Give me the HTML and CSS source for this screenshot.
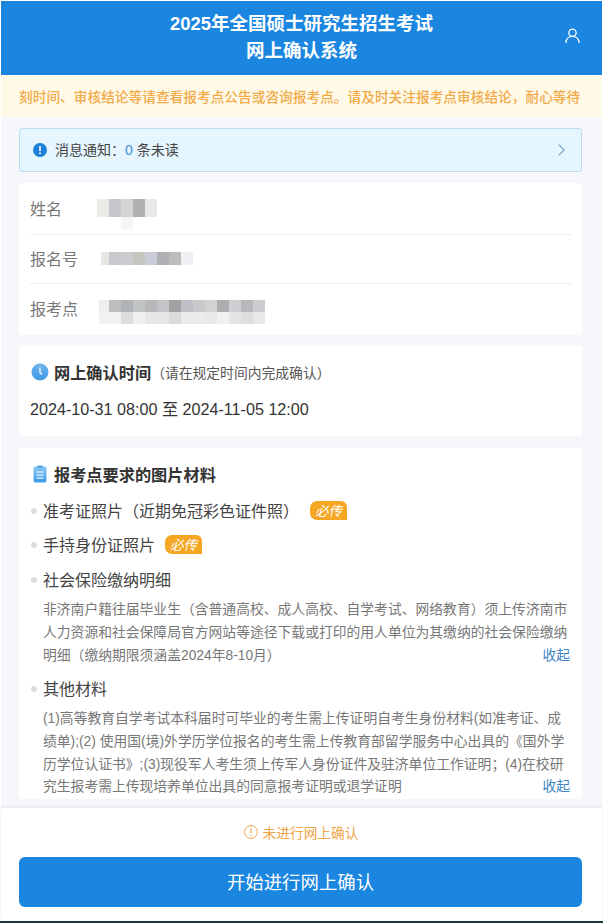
FILE: index.html
```html
<!DOCTYPE html>
<html lang="zh-CN">
<head>
<meta charset="utf-8">
<title>网上确认系统</title>
<link rel="stylesheet" href="styles.css">
</head>
<body>
<div class="page">
  <header class="top">
    <h1 class="top-title">2025年全国硕士研究生招生考试<br>网上确认系统</h1>
    <svg class="user-icon" viewBox="0 0 16 16" fill="none" stroke="#fff" stroke-width="1.4"><circle cx="8" cy="5" r="3.9"/><path d="M1 15.300c.3-4 3.300-6.400 7-6.400s6.700 2.400 7 6.400" stroke-linecap="round"/></svg>
  </header>
  <div class="notice"><span class="notice-text">刻时间、审核结论等请查看报考点公告或咨询报考点。请及时关注报考点审核结论，耐心等待</span></div>
  <main class="main">
    <div class="msg">
      <svg class="msg-icon" viewBox="0 0 14 14"><circle cx="7" cy="7" r="7" fill="#1a80d8"/><rect x="6.200" y="3" width="1.600" height="5.200" rx=".6" fill="#fff"/><circle cx="7" cy="10.300" r="1" fill="#fff"/></svg>
      <span class="msg-text">消息通知：<span class="msg-count">0</span> 条未读</span>
      <svg class="chev" viewBox="0 0 7 12" fill="none" stroke="#6f9cc4" stroke-width="1.100"><path d="M.7 .7l5.500 5.300-5.500 5.300"/></svg>
    </div>

    <section class="card info">
      <div class="row">
        <span class="label">姓名</span>
        <svg class="blur blur-name" viewBox="0 0 60 30"><rect width="12" height="18" fill="#ecebe8"/><rect x="12" width="12" height="18" fill="#c6c7cb"/><rect x="24" width="12" height="18" fill="#d2d4d6"/><rect x="36" width="12" height="18" fill="#b0b0b3"/><rect x="48" width="12" height="18" fill="#e8e8ea"/><rect x="24" y="18" width="12" height="12" fill="#f5f5f6"/></svg>
      </div>
      <div class="row">
        <span class="label">报名号</span>
        <svg class="blur blur-reg" viewBox="0 0 92 13"><rect width="8" height="13" fill="#e8e6e2"/><rect x="8" width="12" height="13" fill="#c8c8cd"/><rect x="20" width="12" height="13" fill="#cbcacf"/><rect x="32" width="12" height="13" fill="#c6c6c0"/><rect x="44" width="12" height="13" fill="#c9ccd6"/><rect x="56" width="12" height="13" fill="#b0b0b4"/><rect x="68" width="12" height="13" fill="#bcbcba"/><rect x="80" width="12" height="13" fill="#eef0f3"/></svg>
      </div>
      <div class="row">
        <span class="label">报考点</span>
        <svg class="blur blur-site" viewBox="0 0 166 24"><rect width="10" height="12" fill="#f0efee"/><rect x="10" width="12" height="12" fill="#bdbebf"/><rect x="22" width="12" height="12" fill="#b0b3b5"/><rect x="34" width="12" height="12" fill="#c0c4c5"/><rect x="46" width="12" height="12" fill="#b9b6b9"/><rect x="58" width="12" height="12" fill="#c3c4c8"/><rect x="70" width="12" height="12" fill="#a2a2a5"/><rect x="82" width="12" height="12" fill="#c1bfc5"/><rect x="94" width="12" height="12" fill="#c9c9cc"/><rect x="106" width="12" height="12" fill="#d1d3d3"/><rect x="118" width="12" height="12" fill="#aeaeb0"/><rect x="130" width="12" height="12" fill="#cfcfd3"/><rect x="142" width="12" height="12" fill="#b9b7bc"/><rect x="154" width="12" height="12" fill="#cdcdd1"/><rect y="12" width="22" height="12" fill="#f2f1f0"/><rect x="22" y="12" width="12" height="12" fill="#dddddd"/><rect x="34" y="12" width="12" height="12" fill="#eff1f1"/><rect x="46" y="12" width="24" height="12" fill="#e6e6e7"/><rect x="70" y="12" width="12" height="12" fill="#dcdcdd"/><rect x="82" y="12" width="24" height="12" fill="#ebebed"/><rect x="106" y="12" width="12" height="12" fill="#e8e9e9"/><rect x="118" y="12" width="12" height="12" fill="#f1f1f2"/><rect x="130" y="12" width="12" height="12" fill="#e4e4e6"/><rect x="142" y="12" width="12" height="12" fill="#dedee0"/><rect x="154" y="12" width="12" height="12" fill="#e8e8ea"/></svg>
      </div>
    </section>

    <section class="card time">
      <h2 class="heading">
        <svg class="head-icon" viewBox="0 0 18 18"><defs><linearGradient id="clk" x1="0" y1="0" x2="0" y2="1"><stop offset="0" stop-color="#70b6ee"/><stop offset="1" stop-color="#3d98e6"/></linearGradient></defs><circle cx="9" cy="9" r="8.500" fill="url(#clk)"/><path d="M9 4.500V9.500l2 2" fill="none" stroke="#fff" stroke-width="1.300"/></svg>
        <span>网上确认时间</span><span class="heading-sub">（请在规定时间内完成确认）</span>
      </h2>
      <p class="date">2024-10-31 08:00 至 2024-11-05 12:00</p>
    </section>

    <section class="card materials">
      <h2 class="heading heading-mat">
        <svg class="head-icon" viewBox="0 0 18 18"><defs><linearGradient id="clp" x1="0" y1="0" x2="0" y2="1"><stop offset="0" stop-color="#8ccaf5"/><stop offset="1" stop-color="#3d9ae8"/></linearGradient></defs><rect x="2.500" y="1.500" width="13" height="16" rx="2" fill="url(#clp)"/><rect x="6" y=".5" width="6" height="2.500" rx=".8" fill="#5aa8e8"/><path d="M5.500 7h7M5.500 10h7M5.500 13h7" stroke="#fff" stroke-width="1.100"/></svg>
        <span>报考点要求的图片材料</span>
      </h2>
      <ul class="list">
        <li class="item">
          <div class="item-title">准考证照片（近期免冠彩色证件照）<span class="badge badge-wide">必传</span></div>
        </li>
        <li class="item">
          <div class="item-title">手持身份证照片<span class="badge">必传</span></div>
        </li>
        <li class="item item-third">
          <div class="item-title">社会保险缴纳明细</div>
          <div class="desc">
            <div>非济南户籍往届毕业生（含普通高校、成人高校、自学考试、网络教育）须上传济南市</div>
            <div>人力资源和社会保障局官方网站等途径下载或打印的用人单位为其缴纳的社会保险缴纳</div>
            <div class="desc-last"><span>明细（缴纳期限须涵盖2024年8-10月）</span><a class="more">收起</a></div>
          </div>
        </li>
        <li class="item item-gap">
          <div class="item-title">其他材料</div>
          <div class="desc">
            <div>(1)高等教育自学考试本科届时可毕业的考生需上传证明自考生身份材料(如准考证、成</div>
            <div>绩单);(2) 使用国(境)外学历学位报名的考生需上传教育部留学服务中心出具的《国外学</div>
            <div>历学位认证书》;(3)现役军人考生须上传军人身份证件及驻济单位工作证明；(4)在校研</div>
            <div class="desc-last"><span>究生报考需上传现培养单位出具的同意报考证明或退学证明</span><a class="more">收起</a></div>
          </div>
        </li>
      </ul>
    </section>
  </main>
  <footer class="foot">
    <div class="status">
      <svg class="status-icon" viewBox="0 0 14 14" fill="none" stroke="#f0a54a" stroke-width="1"><circle cx="7" cy="7" r="6.400"/><path d="M7 3.500v4.500M7 9.500v1.200" stroke-width="1.200"/></svg>
      <span>未进行网上确认</span>
    </div>
    <button class="btn">开始进行网上确认</button>
  </footer>
  <div class="edge"></div>
</div>
</body>
</html>
```
FILE: styles.css
```css
* { box-sizing: border-box; }
html, body { margin: 0; padding: 0; background: #fff; }
body { font-family: "Liberation Sans", "Noto Sans CJK SC", sans-serif; color: #333; }
.page { width: 603px; height: 923px; padding: 1px 1px 0; display: flex; flex-direction: column; overflow: hidden; }

.top { height: 74px; flex: none; background: #1a86e0; position: relative; display: flex; align-items: center; justify-content: center; }
.top-title { margin: 0; padding-bottom: 2px; color: #fff; font-size: 18.5px; font-weight: 700; line-height: 27px; text-align: center; }
.user-icon { position: absolute; right: 22px; top: 27px; width: 15px; height: 15px; }

.notice { height: 42px; flex: none; background: #fff9e8; padding: 0 20px 0 18px; display: flex; align-items: center; overflow: hidden; }
.notice-text { color: #f2ab4a; font-size: 13.7px; font-weight: 500; white-space: nowrap; }

.main { flex: 1; min-height: 0; overflow: hidden; background: #f5f7fa; padding: 11px 20px 0 18px; }

.msg { height: 44px; display: flex; align-items: center; background: #e6f6fe; border: 1px solid #bcdcf0; border-radius: 3px; padding: 0 16px 0 13px; }
.msg-icon { width: 14px; height: 14px; flex: none; }
.msg-text { margin-left: 8px; padding-bottom: 2px; font-size: 14px; color: #444; flex: 1; }
.msg-count { color: #3d8fd8; }
.chev { width: 7px; height: 12px; flex: none; }

.card { background: #fff; border-radius: 3px; }
.info { margin-top: 11px; height: 152px; padding: 0 11px; }
.row { display: flex; align-items: center; border-bottom: 1px solid #ebeef0; position: relative; }
.row:nth-child(1) { height: 52px; padding-bottom: 2px; }
.row:nth-child(2) { height: 49px; padding-bottom: 3px; }
.row:nth-child(3) { height: 51px; padding-bottom: 3px; border-bottom: 0; }
.label { font-size: 16px; color: #777; width: 69px; flex: none; }
.blur { flex: none; display: block; }
.blur-name { width: 60px; height: 30px; margin-left: -2px; margin-top: 13px; }
.blur-reg { width: 92px; height: 13px; margin-left: 2px; margin-top: 1px; }
.blur-site { width: 166px; height: 24px; margin-top: 7px; }

.time { margin-top: 11px; height: 90px; padding: 14px 12px 0; }
.heading { margin: 0; height: 24px; display: flex; align-items: center; font-size: 16.2px; font-weight: 700; color: #333; }
.head-icon { width: 18px; height: 18px; flex: none; margin-right: 5px; }
.heading-sub { font-size: 13.8px; font-weight: 400; color: #555; }
.date { margin: 13px 0 0 -1px; font-size: 16.15px; line-height: 24px; color: #333; }

.materials { margin-top: 12px; padding: 13px 12px 0; }
.heading-mat { height: 26px; }
.list { list-style: none; margin: 7px 0 0; padding: 0; }
.item { padding-left: 12px; position: relative; }
.item::before { content: ""; position: absolute; left: 0; top: 14px; width: 6px; height: 6px; border-radius: 50%; background: #dcdcdc; }
.item-third { margin-top: 1px; }
.item-gap { margin-top: 4px; }
.item-title { height: 34px; padding-bottom: 2px; display: flex; align-items: center; font-size: 16px; color: #444; }
.badge { margin-left: 10px; width: 37px; height: 19px; display: inline-flex; align-items: center; justify-content: center; background: #f5a623; color: #fff; font-size: 13.5px; font-style: italic; border-radius: 7px 6px 0 7px; }
.badge-wide { margin-left: 11px; }
.desc { padding-top: 2px; font-size: 13.8px; line-height: 22.9px; color: #777; white-space: nowrap; }
.desc-last { display: flex; justify-content: space-between; width: 527px; }
.more { color: #3d86c6; }

.foot { flex: none; height: 113px; background: #fff; box-shadow: 0 -1px 4px rgba(0,0,0,.08); padding: 0 19px 0 18px; position: relative; }
.status { height: 49px; padding-bottom: 2px; display: flex; align-items: center; justify-content: center; color: #f0a54a; font-size: 13.7px; }
.status-icon { width: 14px; height: 14px; margin-right: 5px; flex: none; }
.btn { display: block; width: 563px; height: 50px; padding: 0 0 3px; border: 0; border-radius: 6px; background: #1a86e0; color: #fff; font: 400 18.4px "Liberation Sans", "Noto Sans CJK SC", sans-serif; }
.edge { height: 2px; flex: none; margin: 0 -1px; background: #1e3a44; }
```
